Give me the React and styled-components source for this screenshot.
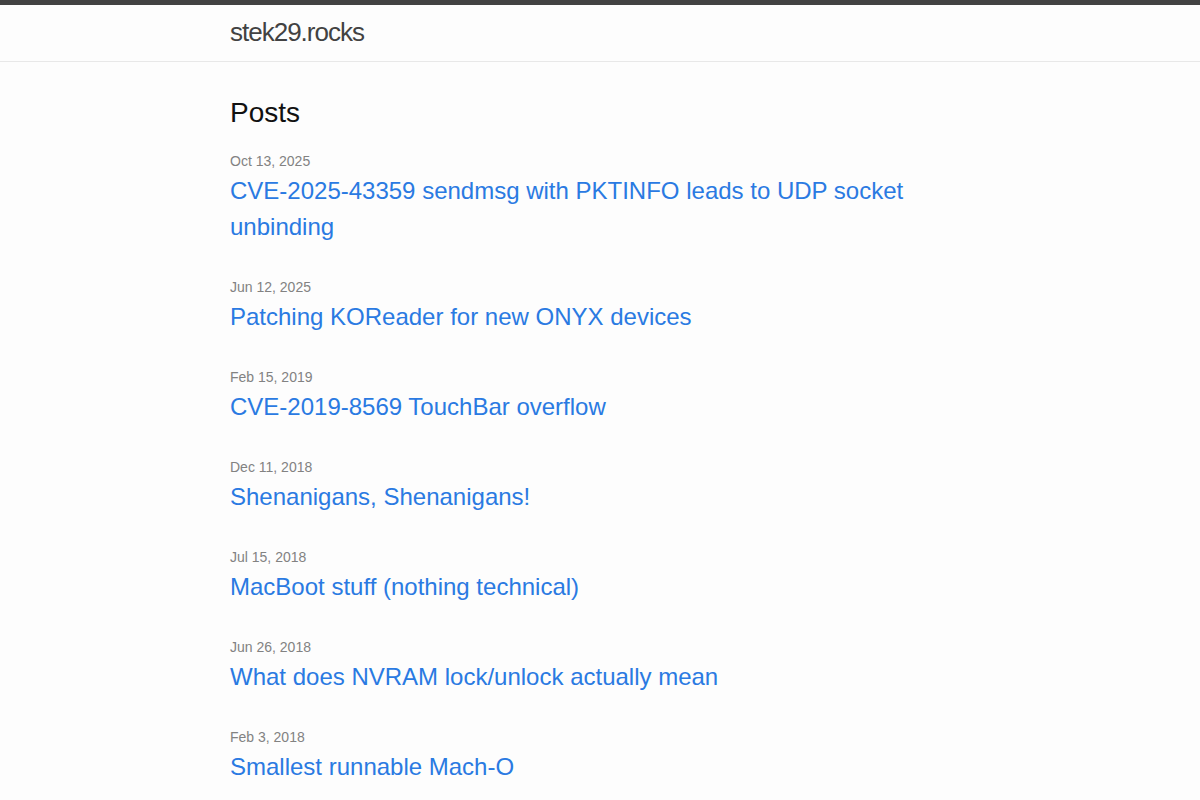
import React from 'react'
import styled, { createGlobalStyle } from 'styled-components'

const posts = [
    { date: 'Oct 13, 2025', title: 'CVE-2025-43359 sendmsg with PKTINFO leads to UDP socket unbinding' },
    { date: 'Jun 12, 2025', title: 'Patching KOReader for new ONYX devices' },
    { date: 'Feb 15, 2019', title: 'CVE-2019-8569 TouchBar overflow' },
    { date: 'Dec 11, 2018', title: 'Shenanigans, Shenanigans!' },
    { date: 'Jul 15, 2018', title: 'MacBoot stuff (nothing technical)' },
    { date: 'Jun 26, 2018', title: 'What does NVRAM lock/unlock actually mean' },
    { date: 'Feb 3, 2018', title: 'Smallest runnable Mach-O' },
]

export default function App() {
    return (
        <>
            <GlobalStyle />
            <Header>
                <Wrapper>
                    <SiteTitle href="#">stek29.rocks</SiteTitle>
                </Wrapper>
            </Header>
            <Main>
                <Wrapper>
                    <ListHeading>Posts</ListHeading>
                    <PostList>
                        {posts.map((p) => (
                            <PostItem key={p.title}>
                                <PostMeta>{p.date}</PostMeta>
                                <PostTitle>
                                    <PostLink href="#">{p.title}</PostLink>
                                </PostTitle>
                            </PostItem>
                        ))}
                    </PostList>
                </Wrapper>
            </Main>
        </>
    )
}

const GlobalStyle = createGlobalStyle`
    body {
        margin: 0;
        background: #fdfdfd;
        color: #111;
        font: 400 16px/1.5 "Liberation Sans", Arial, Helvetica, sans-serif;
    }
`

const Wrapper = styled.div`
    max-width: 740px;
    margin: 0 auto;
    padding: 0 30px;
`

const Header = styled.header`
    border-top: 5px solid #424242;
    border-bottom: 1px solid #e8e8e8;
    min-height: 56px;
`

const SiteTitle = styled.a`
    display: inline-block;
    font-size: 26px;
    line-height: 54px;
    letter-spacing: -1px;
    color: #424242;
    text-decoration: none;
`

const Main = styled.main`
    padding: 30px 0;
`

const ListHeading = styled.h2`
    font-size: 28px;
    font-weight: 400;
    line-height: 42px;
    margin: 0 0 15px;
`

const PostList = styled.ul`
    list-style: none;
    margin: 0;
    padding: 0;
`

const PostItem = styled.li`
    margin-bottom: 30px;
`

const PostMeta = styled.span`
    font-size: 14px;
    color: #828282;
`

const PostTitle = styled.h3`
    margin: 0;
    font-weight: 400;
    font-size: 24px;
    line-height: 36px;
`

const PostLink = styled.a`
    display: block;
    color: #2a7ae2;
    text-decoration: none;
`
